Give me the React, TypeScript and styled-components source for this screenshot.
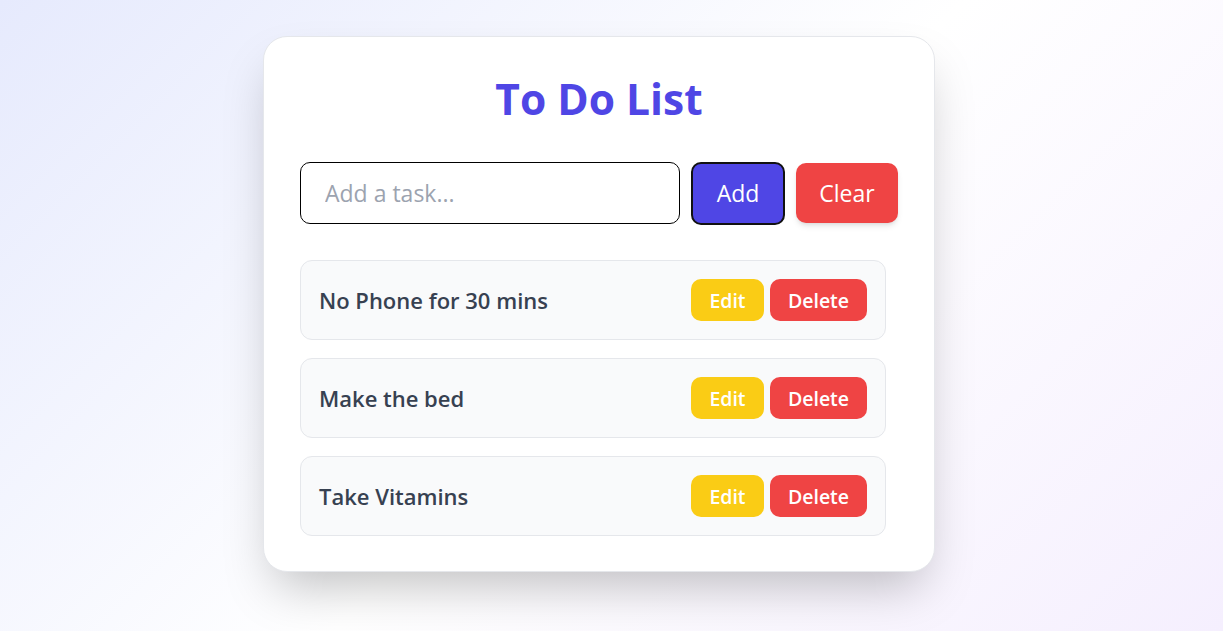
import styled, { createGlobalStyle } from 'styled-components'

const colors = {
  primary: '#4f46e5',
  danger: '#ef4444',
  warning: '#facc15',
  text: '#374151',
  placeholder: '#9ca3af',
  border: '#e5e7eb',
  itemBg: '#f9fafb',
  white: '#fff',
}

const GlobalStyle = createGlobalStyle`
  * { box-sizing: border-box; }
  body {
    margin: 0;
    font-family: 'Open Sans', 'Noto Sans', sans-serif;
    background: linear-gradient(135deg, #e6eafd 0%, #ffffff 52%, #f5effe 100%);
    min-height: 100vh;
  }
`

const Page = styled.div`
  min-height: 100vh;
  display: flex;
  justify-content: center;
  align-items: flex-start;
  padding: 36px 25px 0 0;
`

const Card = styled.div`
  width: 672px;
  background: ${colors.white};
  border: 1px solid ${colors.border};
  border-radius: 24px;
  padding: 38px 36px 35px;
  box-shadow: 0 25px 50px -12px rgba(0, 0, 0, 0.25);
`

const Title = styled.h1`
  margin: 0 0 39px;
  text-align: center;
  font-size: 42.5px;
  line-height: 48px;
  font-weight: 700;
  color: ${colors.primary};
`

const InputRow = styled.div`
  display: flex;
  align-items: center;
  gap: 11px;
  height: 62px;
`

const TaskInput = styled.input`
  flex: 1;
  height: 62px;
  border: 1px solid #000;
  border-radius: 10px;
  padding: 0 24px;
  font-family: inherit;
  font-size: 23px;
  color: ${colors.text};
  outline: none;
  &::placeholder {
    color: ${colors.placeholder};
  }
`

const ActionButton = styled.button<{ $bg: string; $w: number; $outlined?: boolean }>`
  width: ${(p) => p.$w}px;
  height: ${(p) => (p.$outlined ? 63 : 60)}px;
  background: ${(p) => p.$bg};
  color: ${colors.white};
  border: ${(p) => (p.$outlined ? '2px solid #111' : 'none')};
  border-radius: 10px;
  font-family: inherit;
  font-size: 23px;
  cursor: pointer;
  box-shadow: ${(p) => (p.$outlined ? 'none' : '0 4px 6px -1px rgba(0,0,0,0.1), 0 2px 4px -2px rgba(0,0,0,0.1)')};
`

const List = styled.ul`
  list-style: none;
  margin: 36px 0 0;
  padding: 0 12px 0 0;
  display: flex;
  flex-direction: column;
  gap: 18px;
`

const Item = styled.li`
  height: 80px;
  display: flex;
  align-items: center;
  justify-content: space-between;
  padding: 0 18px 0 18px;
  background: ${colors.itemBg};
  border: 1px solid ${colors.border};
  border-radius: 12px;
`

const ItemText = styled.span`
  font-size: 22px;
  font-weight: 600;
  color: ${colors.text};
`

const ItemButtons = styled.div`
  display: flex;
  gap: 6px;
`

const SmallButton = styled.button<{ $bg: string; $w: number }>`
  width: ${(p) => p.$w}px;
  height: 42px;
  background: ${(p) => p.$bg};
  color: ${colors.white};
  border: none;
  border-radius: 10px;
  font-family: inherit;
  font-size: 19.5px;
  font-weight: 600;
  cursor: pointer;
`

const tasks = ['No Phone for 30 mins', 'Make the bed', 'Take Vitamins']

export default function App() {
  return (
    <>
      <GlobalStyle />
      <Page>
        <Card>
          <Title>To Do List</Title>
          <InputRow>
            <TaskInput placeholder="Add a task..." />
            <ActionButton $bg={colors.primary} $w={94} $outlined>Add</ActionButton>
            <ActionButton $bg={colors.danger} $w={102}>Clear</ActionButton>
          </InputRow>
          <List>
            {tasks.map((t) => (
              <Item key={t}>
                <ItemText>{t}</ItemText>
                <ItemButtons>
                  <SmallButton $bg={colors.warning} $w={73}>Edit</SmallButton>
                  <SmallButton $bg={colors.danger} $w={97}>Delete</SmallButton>
                </ItemButtons>
              </Item>
            ))}
          </List>
        </Card>
      </Page>
    </>
  )
}
